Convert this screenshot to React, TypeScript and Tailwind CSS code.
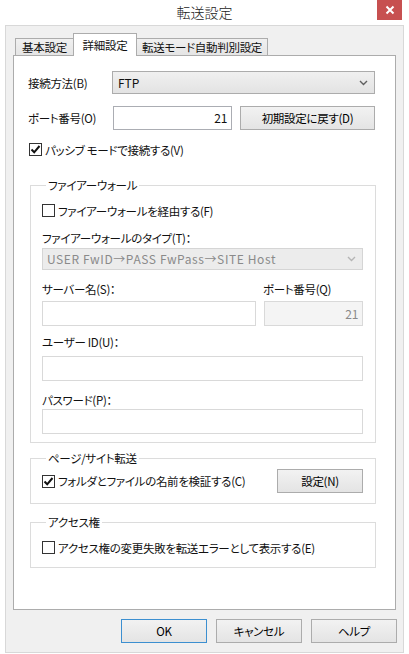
import React from "react";

function CheckBox({ checked }: { checked?: boolean }) {
    return (
        <span className="w-[13px] h-[13px] shrink-0 border border-[#333333] bg-white flex items-center justify-center">
            {checked && (
                <svg width="11" height="11" viewBox="0 0 11 11">
                    <path d="M1.5 5.5 L4.2 8.3 L9.5 2" fill="none" stroke="#111" strokeWidth="2" />
                </svg>
            )}
        </span>
    );
}

function Chevron({ color }: { color: string }) {
    return (
        <svg width="9" height="6" viewBox="0 0 9 6" className="shrink-0">
            <path d="M1 1 L4.5 4.5 L8 1" fill="none" stroke={color} strokeWidth="1.4" />
        </svg>
    );
}

function Button({ label, className = "" }: { label: string; className?: string }) {
    return (
        <div
            className={`h-[24px] flex items-center justify-center border bg-gradient-to-b from-[#f2f2f2] to-[#e4e4e4] leading-[14px] text-black whitespace-nowrap ${className}`}
        >
            {label}
        </div>
    );
}

export default function App() {
    return (
        <div className="w-[409px] h-[654px] bg-white font-['Noto_Sans_CJK_JP',sans-serif] font-normal [font-feature-settings:'palt'] text-[11.5px] tracking-[-0.3px] whitespace-nowrap text-[#111] overflow-hidden">
            {/* title bar */}
            <div className="h-[25px] grid grid-cols-[1fr_auto_1fr]">
                <div />
                <div className="text-[14px] font-light tracking-normal leading-[25px] text-[#1a1a1a]">転送設定</div>
                <div className="justify-self-end mr-[7px] w-[25px] h-[20px] bg-[#c75050] flex items-center justify-center">
                    <svg width="10" height="10" viewBox="0 0 10 10">
                        <path d="M1.5 1.5 L8.5 8.5 M8.5 1.5 L1.5 8.5" stroke="#fff" strokeWidth="2" />
                    </svg>
                </div>
            </div>

            {/* dialog body */}
            <div className="ml-[5px] w-[399px] h-[628px] border border-[#d8d8d8] bg-[#f0f0f0] flex flex-col">
                <div className="pl-[7px] pt-[7px] flex flex-col">
                    {/* tabs */}
                    <div className="flex items-end h-[22px] pl-[2px]">
                        <div className="w-[58px] h-[17px] border-t border-l border-[#acacac] bg-gradient-to-b from-[#f0f0f0] to-[#e5e5e5] leading-[16px] text-center">
                            基本設定
                        </div>
                        <div className="relative z-10 w-[64px] h-[23px] -mb-px border-t border-l border-r border-[#acacac] bg-white leading-[22px] text-center">
                            詳細設定
                        </div>
                        <div className="w-[131px] h-[17px] border-t border-r border-[#acacac] bg-gradient-to-b from-[#f0f0f0] to-[#e5e5e5] leading-[16px] text-center">
                            転送モード自動判別設定
                        </div>
                    </div>

                    {/* tab panel */}
                    <div className="w-[383px] h-[555px] border border-[#acacac] bg-white pl-[14px] pt-[15px] flex flex-col leading-[14px]">
                        <div className="flex items-center h-[23px]">
                            <div className="w-[84px]">接続方法(B)</div>
                            <div className="w-[263px] h-[23px] border border-[#acacac] bg-gradient-to-b from-[#f0f0f0] to-[#e3e3e3] flex items-center justify-between pl-[5px] pr-[6px]">
                                <span className="text-[12px] tracking-normal">FTP</span>
                                <Chevron color="#606060" />
                            </div>
                        </div>

                        <div className="flex items-center h-[24px] mt-[12px]">
                            <div className="w-[85px]">ポート番号(O)</div>
                            <div className="w-[119px] h-[24px] border border-[#abadb3] bg-white flex items-center justify-end pr-[4px] text-[12px]">21</div>
                            <Button label="初期設定に戻す(D)" className="ml-[8px] w-[135px] border-[#acacac]" />
                        </div>

                        <div className="flex items-center h-[13px] mt-[13px] ml-[1px] gap-[3px]">
                            <CheckBox checked />
                            <span>パッシブ モードで接続する(V)</span>
                        </div>

                        {/* firewall */}
                        <fieldset className="mt-[22px] ml-[2px] w-[346px] min-w-0 border border-[#dcdcdc] pl-[11px] pb-[8px] flex flex-col">
                            <legend className="ml-[4px] px-[2px] leading-[14px]">ファイアーウォール</legend>
                            <div className="flex items-center h-[13px] mt-[12px] gap-[3px]">
                                <CheckBox />
                                <span>ファイアーウォールを経由する(F)</span>
                            </div>
                            <div className="mt-[14px]">ファイアーウォールのタイプ(T)：</div>
                            <div className="mt-[3px] w-[321px] h-[22px] border border-[#d5d5d5] bg-[#ececec] flex items-center justify-between pl-[4px] pr-[6px] text-[#8a8a8a]">
                                <span className="text-[12px] tracking-[0.6px]">USER FwID→PASS FwPass→SITE Host</span>
                                <Chevron color="#b5b5b5" />
                            </div>
                            <div className="flex mt-[12px]">
                                <div className="w-[214px] flex flex-col">
                                    <div>サーバー名(S)：</div>
                                    <div className="mt-[5px] h-[25px] border border-[#d9d9d9] bg-white" />
                                </div>
                                <div className="ml-[8px] w-[99px] flex flex-col">
                                    <div className="-ml-px">ポート番号(Q)</div>
                                    <div className="mt-[5px] h-[25px] border border-[#d9d9d9] bg-[#f4f4f4] flex items-center justify-end pr-[4px] text-[12px] text-[#8a8a8a]">
                                        21
                                    </div>
                                </div>
                            </div>
                            <div className="mt-[9px]">ユーザー ID(U)：</div>
                            <div className="mt-[7px] w-[321px] h-[25px] border border-[#d9d9d9] bg-white" />
                            <div className="mt-[12px]">パスワード(P)：</div>
                            <div className="mt-[2px] w-[321px] h-[25px] border border-[#d9d9d9] bg-white" />
                        </fieldset>

                        {/* page / site transfer */}
                        <fieldset className="mt-[8px] ml-[2px] w-[346px] min-w-0 border border-[#dcdcdc] pl-[11px] pr-[12px] pb-[10px] flex flex-col">
                            <legend className="ml-[4px] px-[2px] leading-[14px]">ページ/サイト転送</legend>
                            <div className="mt-[4px] h-[24px] flex items-center gap-[3px]">
                                <CheckBox checked />
                                <span>フォルダとファイルの名前を検証する(C)</span>
                                <Button label="設定(N)" className="ml-auto w-[86px] border-[#acacac]" />
                            </div>
                        </fieldset>

                        {/* access rights */}
                        <fieldset className="mt-[11px] ml-[2px] w-[346px] min-w-0 border border-[#dcdcdc] pl-[11px] pb-[13px] flex flex-col">
                            <legend className="ml-[4px] px-[2px] leading-[14px]">アクセス権</legend>
                            <div className="mt-[12px] h-[13px] flex items-center gap-[3px]">
                                <CheckBox />
                                <span>アクセス権の変更失敗を転送エラーとして表示する(E)</span>
                            </div>
                        </fieldset>
                    </div>
                </div>

                {/* dialog buttons */}
                <div className="mt-[9px] pr-[6px] flex justify-end gap-[9px]">
                    <Button label="OK" className="w-[86px] border-[#3c8fd0]" />
                    <Button label="キャンセル" className="w-[86px] border-[#acacac]" />
                    <Button label="ヘルプ" className="w-[86px] border-[#acacac]" />
                </div>
            </div>
        </div>
    );
}
